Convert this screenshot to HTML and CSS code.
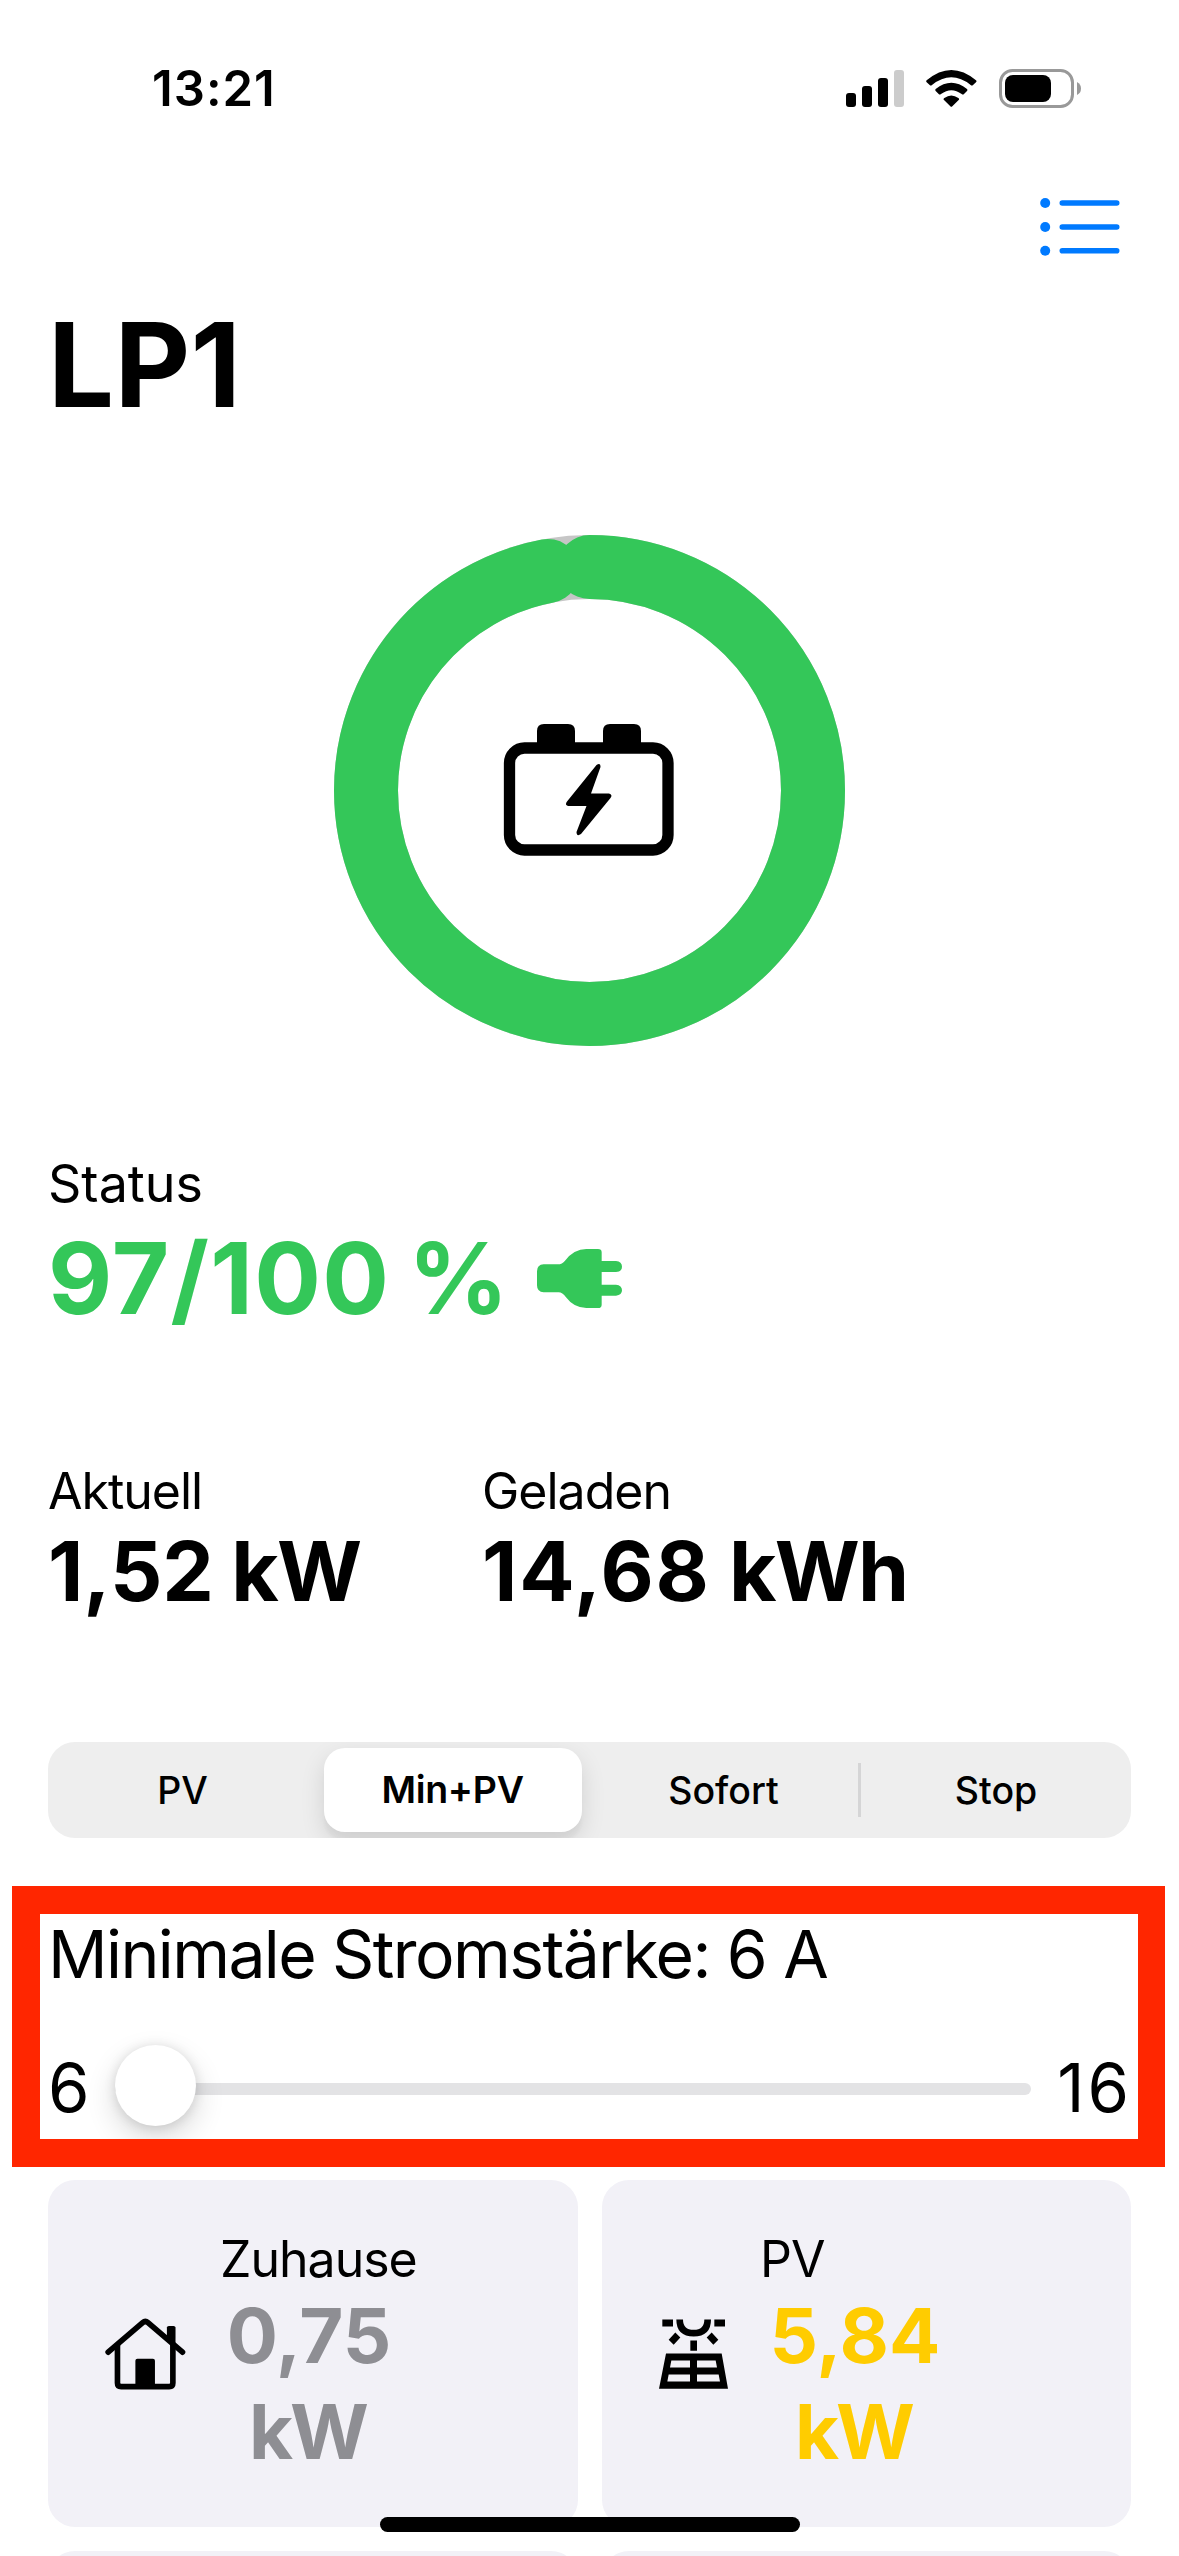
FILE: index.html
```
<!DOCTYPE html>
<html lang="de">
<head>
    <meta charset="UTF-8">
    <meta name="viewport" content="width=device-width, initial-scale=1.0">
    <title>LP1</title>
    <link rel="stylesheet" href="styles.css">
</head>
<body>
<div class="screen">
    <header class="status-bar">
        <span class="time">13:21</span>
        <div class="status-icons">
            <svg class="signal" width="58" height="37" viewBox="0 0 58 37">
                <rect x="0" y="23" width="10" height="14" rx="3"/>
                <rect x="16" y="16" width="10" height="21" rx="3"/>
                <rect x="32" y="8" width="10" height="29" rx="3"/>
                <rect x="48" y="0" width="10" height="37" rx="3" fill="#ccc"/>
            </svg>
            <svg class="wifi" width="51" height="37" viewBox="0 0 153 111">
                <path d="M2 31Q76 -31 150 31Q153 34 150 37L141 45Q138 48 134 45Q76 -1 18 45Q14 48 11 45L2 37Q-1 34 2 31Z"/>
                <path d="M29 57Q76 20 123 57Q126 60 123 63L114 72Q111 75 107 72Q76 49 45 72Q41 75 38 72L29 63Q26 60 29 57Z"/>
                <path d="M55 84Q76 69 97 84Q101 87 98 90L79 109Q76 112 73 109L54 90Q51 87 55 84Z"/>
            </svg>
            <svg class="battery" width="83" height="39" viewBox="0 0 83 39">
                <rect x="1.5" y="1.5" width="72" height="36" rx="12" fill="none" stroke="#999" stroke-width="3"/>
                <rect x="6" y="6" width="46" height="27" rx="8"/>
                <path d="M78 13Q82 15 82 19.500Q82 24 78 26Z" fill="#999"/>
            </svg>
        </div>
    </header>

    <nav class="toolbar">
        <svg width="80" height="58" viewBox="0 0 80 58">
            <circle cx="5.200" cy="5" r="5"/>
            <circle cx="5.200" cy="29" r="5"/>
            <circle cx="5.200" cy="52.700" r="5"/>
            <rect x="19.500" y="2.200" width="60" height="5.600" rx="2.800"/>
            <rect x="19.500" y="26.200" width="60" height="5.600" rx="2.800"/>
            <rect x="19.500" y="49.900" width="60" height="5.600" rx="2.800"/>
        </svg>
    </nav>

    <main>
        <h1>LP1</h1>

        <svg class="ring" width="511" height="511" viewBox="0 0 511 511">
            <circle class="ring-track" cx="255.500" cy="255.500" r="223.500"/>
            <circle class="ring-value" cx="255.500" cy="255.500" r="223.500" pathLength="100"
                stroke-dasharray="97 100" transform="rotate(-90 255.500 255.500)"/>
            <!-- car battery -->
            <rect x="175.500" y="213" width="158.500" height="102" rx="15" fill="none" stroke="#000" stroke-width="11.300"/>
            <path d="M203 211V196Q203 189 210 189H234Q241 189 241 196V211ZM269 211V196Q269 189 276 189H300Q307 189 307 196V211Z"/>
            <path d="M262.500 230Q266.500 227 266.500 232L257 258.500H275Q279 259.500 276.500 263L247 299Q242.500 302 242.500 297L252.500 271H234Q230.500 270 233 266.500Z"/>
        </svg>

        <section class="charge">
            <div class="label">Status</div>
            <div class="charge-value">
                <span>97/100 %</span>
                <svg width="85" height="59" viewBox="0 0 255 177">
                    <path d="M20 46H62Q76 46 84 35Q111 0 148 0H183Q194 0 194 10V36H237Q255 38 255 53Q255 68 237 69H194V107H237Q255 109 255 124Q255 139 237 140H194V167Q194 177 183 177H148Q111 177 87 145Q76 130 65 130H20Q0 129 0 109V67Q0 47 20 46Z"/>
                </svg>
            </div>
        </section>

        <section class="metrics">
            <div>
                <div class="label">Aktuell</div>
                <div class="value">1,52 <span>kW</span></div>
            </div>
            <div>
                <div class="label">Geladen</div>
                <div class="value energy">14,68 <span>kWh</span></div>
            </div>
        </section>

        <div class="segmented">
            <div class="segment">PV</div>
            <div class="segment selected"><span>Min+PV</span></div>
            <div class="segment">Sofort</div>
            <div class="segment divided">Stop</div>
        </div>

        <section class="current-box">
            <div class="current-title">Minimale Stromstärke: 6 A</div>
            <div class="slider">
                <span class="min">6</span>
                <div class="track"><div class="thumb"></div></div>
                <span class="max">16</span>
            </div>
        </section>

        <section class="cards">
            <div class="card home">
                <svg width="81" height="72" viewBox="75 350 243 217">
                    <path d="M84 453L188 364Q196 357 204 364L308 453" fill="none" stroke="#000" stroke-width="17" stroke-linecap="round"/>
                    <path d="M112 430V546Q112 557 123 557H268Q279 557 279 546V428" fill="none" stroke="#000" stroke-width="17"/>
                    <path d="M261 412V379Q261 374 267 374H281Q287 374 287 379V432Z"/>
                    <path d="M166 557V479Q166 473 172 473H219Q225 473 225 479V557Z"/>
                </svg>
                <div class="card-text">
                    <div class="label">Zuhause</div>
                    <div class="value">0,75 <span>kW</span></div>
                </div>
            </div>
            <div class="card pv">
                <svg width="69" height="70" viewBox="177 446 207 209">
                    <path d="M187 447H219V468H187ZM343 447H375V468H343ZM271 510H291V541H271ZM226 486L241 501L221 523L206 508ZM335 486L320 501L340 523L355 508Z"/>
                    <path d="M239 447Q239 488 281 488Q323 488 323 447" fill="none" stroke="#000" stroke-width="20"/>
                    <path fill-rule="evenodd" d="M198 549H365L384 655H177ZM214 570L210 591H270V570ZM291 570V591H351L347 570ZM206 612L202 633H270V612ZM291 612V633H360L356 612Z"/>
                </svg>
                <div class="card-text">
                    <div class="label">PV</div>
                    <div class="value">5,84 <span>kW</span></div>
                </div>
            </div>
            <div class="card"></div>
            <div class="card"></div>
        </section>
    </main>

    <div class="home-indicator"></div>
</div>
</body>
</html>
```
FILE: styles.css
```
* {
    box-sizing: border-box;
}
body {
    margin: 0;
    background: #fff;
    color: #000;
    font-family: Inter, "Liberation Sans", sans-serif;
}
.screen {
    position: relative;
    width: 1179px;
    height: 2556px;
    overflow: hidden;
}
svg {
    display: block;
    flex: none;
}
main {
    padding: 0 48px;
}

/* status bar */
.status-bar {
    display: flex;
    justify-content: space-between;
    align-items: center;
    height: 176px;
    padding: 0 97px 0 152px;
}
.time {
    font-size: 49px;
    font-weight: 600;
    letter-spacing: 1px;
}
.status-icons {
    display: flex;
    align-items: center;
    gap: 22px;
}
.toolbar {
    display: flex;
    justify-content: flex-end;
    align-items: center;
    height: 101px;
    padding-right: 59px;
    fill: #007aff;
}
h1 {
    margin: 0;
    font-size: 117px;
    line-height: 175px;
    letter-spacing: 0.3px;
}

/* state of charge */
.ring {
    margin: 83px auto 106px 286px;
}
.ring circle {
    fill: none;
    stroke-width: 64;
}
.ring-track {
    stroke: #c6c6c6;
}
.ring-value {
    stroke: #34c759;
    stroke-linecap: round;
}
.label {
    font-size: 50px;
    line-height: 60px;
    letter-spacing: -1px;
}
.charge .label {
    font-size: 52px;
    line-height: 64px;
    letter-spacing: 0;
}
.charge-value {
    display: flex;
    align-items: center;
    gap: 27px;
    color: #34c759;
    fill: #34c759;
    font-size: 99px;
    font-weight: 700;
    line-height: 124px;
    letter-spacing: 1.3px;
    word-spacing: -7px;
}
.metrics {
    display: grid;
    grid-template-columns: 434px 1fr;
    margin-top: 121px;
}
.metrics .value {
    font-size: 82px;
    font-weight: 700;
    line-height: 101px;
    letter-spacing: -0.1px;
    word-spacing: -2px;
}
.metrics .energy {
    letter-spacing: 1.8px;
    word-spacing: -3px;
}
.metrics .value span {
    letter-spacing: -1.8px;
}

/* charge mode */
.segmented {
    display: grid;
    grid-template-columns: 269px 271px 271px 1fr;
    height: 96px;
    margin-top: 120px;
    border-radius: 27px;
    background: #eee;
    overflow: hidden;
    font-size: 37.5px;
    font-weight: 500;
}
.segment {
    display: flex;
    justify-content: center;
    align-items: center;
}
.selected {
    padding: 6px;
    font-weight: 600;
}
.selected span {
    width: 258px;
    line-height: 84px;
    border-radius: 21px;
    background: #fff;
    text-align: center;
    letter-spacing: -0.3px;
    box-shadow: 0 9px 24px rgba(0, 0, 0, 0.12), 0 9px 3px rgba(0, 0, 0, 0.03);
}
.divided::before {
    content: "";
    width: 3px;
    height: 54px;
    margin: 0 auto 0 -1px;
    background: #d5d5d6;
}
.divided::after {
    content: "";
    margin-left: auto;
}

/* minimum current */
.current-box {
    height: 281px;
    margin: 48px -34px 0 -36px;
    padding: 0 6px 0 8px;
    border: 28px solid #ff2600;
    border-right-width: 27px;
    overflow: hidden;
    font-size: 66px;
}
.current-title {
    line-height: 80px;
    letter-spacing: -1.6px;
}
.slider {
    display: flex;
    align-items: center;
    height: 103px;
    margin-top: 42px;
    font-size: 67px;
}
.slider .min {
    width: 67px;
}
.slider .max {
    width: 101px;
    text-align: right;
    letter-spacing: 3px;
}
.track {
    display: flex;
    align-items: center;
    flex: 1;
    height: 12px;
    margin-top: 3px;
    border-radius: 6px;
    background: #e3e3e5;
}
.thumb {
    width: 81px;
    height: 81px;
    flex: none;
    margin-top: -7px;
    border-radius: 50%;
    background: #fff;
    box-shadow: 0 1px 12px rgba(0, 0, 0, 0.12), 0 12px 30px rgba(0, 0, 0, 0.16);
}

/* power cards */
.cards {
    display: grid;
    grid-template-columns: 530px 529px;
    grid-auto-rows: 347px;
    gap: 24px;
    margin-top: 13px;
}
.card {
    display: flex;
    align-items: center;
    gap: 34px;
    padding-left: 57px;
    border-radius: 27px;
    background: #f2f1f7;
}
.card .label {
    padding-top: 1px;
}
.card .value {
    margin-top: -2px;
    font-size: 76px;
    font-weight: 700;
    line-height: 96px;
    text-align: center;
}
.card .value span {
    margin-right: 3px;
    letter-spacing: -3px;
}
.home .value {
    width: 178px;
    color: #8e8e93;
}
.pv {
    gap: 32px;
}
.pv .value {
    width: 190px;
    color: #fc0;
}

.home-indicator {
    position: absolute;
    left: 380px;
    bottom: 24px;
    width: 420px;
    height: 15px;
    border-radius: 8px;
    background: #000;
}
```
